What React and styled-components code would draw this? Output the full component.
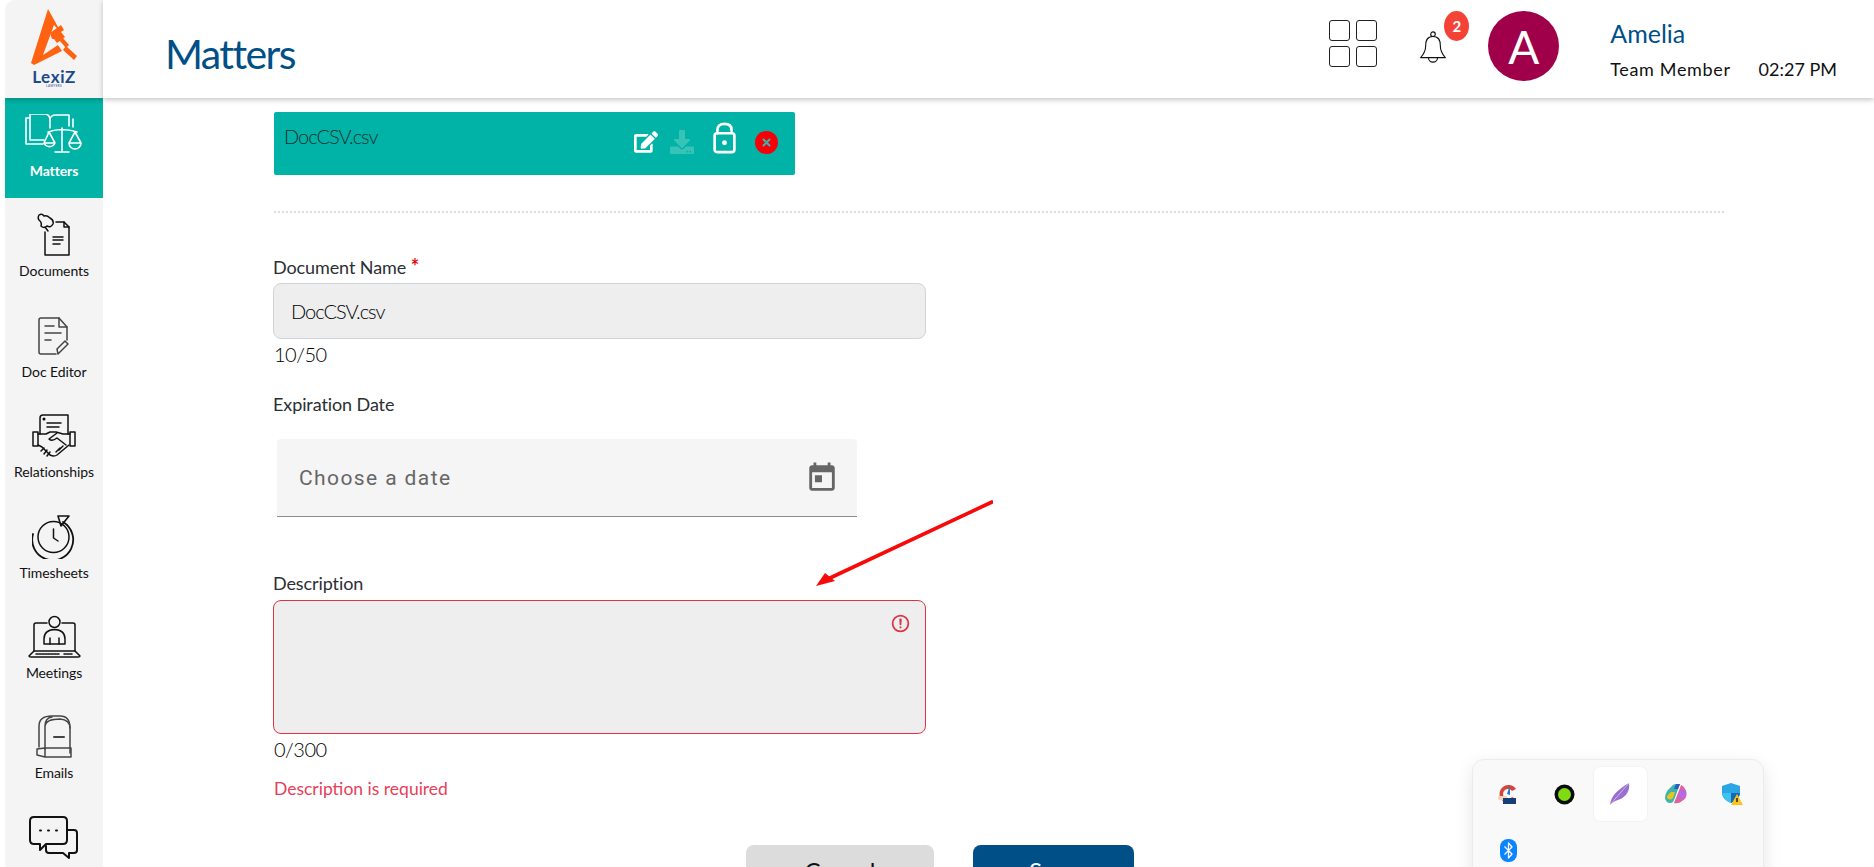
import React from 'react';
import styled, { createGlobalStyle } from 'styled-components';
import { FaEdit, FaDownload } from 'react-icons/fa';

const GlobalStyle = createGlobalStyle`
  html, body {
    margin: 0;
    padding: 0;
    height: 867px;
    overflow: hidden;
    background: #fff;
    font-family: 'Lato', 'Open Sans', sans-serif;
    color: #212529;
  }
`;

const Page = styled.div`
  display: flex;
  width: 1874px;
  height: 867px;
  overflow: hidden;
  position: relative;
`;

const Sidebar = styled.nav`
  width: 98px;
  margin-left: 5px;
  flex-shrink: 0;
  background: #f4f4f4;
  border-top-left-radius: 10px;
  display: flex;
  flex-direction: column;
  overflow: hidden;
`;

const LogoCell = styled.div`
  height: 98px;
  flex-shrink: 0;
  display: flex;
  flex-direction: column;
  align-items: center;
  padding-top: 9px;
  box-sizing: border-box;
  position: relative;
  z-index: 2;
  box-shadow: 0 2px 5px rgba(0, 0, 0, 0.22);
`;

const LogoName = styled.span`
  font-size: 17px;
  line-height: 15px;
  font-weight: 700;
  color: #1d4a8c;
  letter-spacing: 0.6px;
  margin-top: 4px;
`;

const LogoTag = styled.span`
  font-size: 3px;
  line-height: 5px;
  color: #1d4a8c;
  letter-spacing: 0.3px;
`;

const NavItem = styled.a`
  height: 100.4px;
  flex-shrink: 0;
  display: flex;
  flex-direction: column;
  align-items: center;
  justify-content: flex-start;
  padding-top: 15px;
  box-sizing: border-box;
  background: ${({ $active }) => ($active ? '#00b3a6' : 'transparent')};
  color: ${({ $active }) => ($active ? '#fff' : '#111')};
  font-size: 14px;
  letter-spacing: -0.1px;
  font-weight: ${({ $active }) => ($active ? 700 : 400)};
  svg {
    display: block;
  }
`;

const NavIconBox = styled.div`
  height: 44px;
  display: flex;
  align-items: center;
  justify-content: center;
  margin-bottom: 5px;
`;

const Main = styled.div`
  flex: 1;
  min-width: 0;
  display: flex;
  flex-direction: column;
`;

const Header = styled.header`
  height: 98px;
  flex-shrink: 0;
  display: flex;
  align-items: center;
  background: #fff;
  box-shadow: 0 2px 5px rgba(0, 0, 0, 0.22);
  padding: 0 37px 0 63px;
  position: relative;
  z-index: 1;
`;

const Title = styled.h1`
  margin: 0 auto 0 -1px;
  font-size: 41px;
  font-weight: 400;
  color: #004f86;
  letter-spacing: -1.6px;
  position: relative;
  top: 4px;
`;

const GridIcon = styled.div`
  display: grid;
  grid-template-columns: 21px 21px;
  grid-template-rows: 21px 21px;
  gap: 5px 6px;
  margin: 0 42px 11px 0;
`;

const GridCell = styled.span`
  border: 1.5px solid #222;
  border-radius: 3px;
`;

const BellWrap = styled.div`
  position: relative;
  width: 28px;
  height: 33px;
  margin: 0 41px 3px 0;
`;

const Badge = styled.span`
  position: absolute;
  left: 25px;
  top: -20px;
  width: 25px;
  height: 30px;
  border-radius: 50%;
  background: #f44336;
  color: #fff;
  font-size: 15px;
  font-weight: 700;
  display: flex;
  align-items: center;
  justify-content: center;
`;

const Avatar = styled.div`
  width: 71px;
  height: 70px;
  border-radius: 50%;
  background: #a0004a;
  color: #fff;
  font-size: 46px;
  display: flex;
  align-items: center;
  justify-content: center;
  margin: 0 51px 6px 0;
`;

const UserBlock = styled.div`
  display: flex;
  flex-direction: column;
  gap: 10px;
`;

const UserName = styled.span`
  font-size: 25px;
  line-height: 30px;
  color: #004f86;
`;

const UserMeta = styled.div`
  display: flex;
  gap: 28px;
  font-size: 18px;
  line-height: 22px;
  color: #111;
`;

const RoleText = styled.span`
  letter-spacing: 0.65px;
`;

const Content = styled.main`
  padding: 14px 150px 0 171px;
  position: relative;
`;

const FileBar = styled.div`
  width: 521px;
  height: 63px;
  background: #00b3a6;
  border-radius: 2px;
  display: flex;
  justify-content: space-between;
  padding: 12px 17px 0 10px;
  box-sizing: border-box;
`;

const FileName = styled.span`
  font-size: 20px;
  font-weight: 300;
  line-height: 24px;
  letter-spacing: -1px;
  color: #17312f;
`;

const FileActions = styled.div`
  display: flex;
  align-items: flex-end;
  gap: 19px;
  height: 30px;
`;

const EditGroup = styled.div`
  display: flex;
  align-items: flex-end;
  gap: 12px;
`;

const ActionIcon = styled.span`
  display: flex;
  opacity: ${({ $dim }) => ($dim ? 0.22 : 1)};
  color: #fff;
`;

const Divider = styled.hr`
  margin: 36px 0 0;
  border: 0;
  border-top: 2px dotted #dcdcdc;
`;

const FieldLabel = styled.label`
  display: block;
  font-size: 18px;
  line-height: 22px;
  color: #2b2f33;
  letter-spacing: -0.1px;
  margin-left: -1px;
  margin-top: ${({ $top }) => $top}px;
`;

const Required = styled.span`
  color: #e01010;
  font-weight: 700;
  font-size: 20px;
  line-height: 18px;
`;

const TextBox = styled.div`
  width: 653px;
  height: 56px;
  margin-top: 5px;
  margin-left: -1px;
  box-sizing: border-box;
  background: #eee;
  border: 1px solid #ced4da;
  border-radius: 8px;
  padding: 0 17px;
  display: flex;
  align-items: center;
  font-size: 20px;
  font-weight: 300;
  letter-spacing: -1px;
  color: #000;
`;

const Counter = styled.div`
  font-size: 20px;
  font-weight: 300;
  line-height: 24px;
  letter-spacing: -0.5px;
  margin-top: 3px;
  color: #000;
`;

const DateBox = styled.div`
  width: 580px;
  height: 78px;
  margin: 24px 0 0 3px;
  box-sizing: border-box;
  background: #f5f5f5;
  border-bottom: 1px solid #8b8b8b;
  border-radius: 4px 4px 0 0;
  padding: 0 18px 0 22px;
  display: flex;
  align-items: center;
  justify-content: space-between;
  font-family: 'Roboto', sans-serif;
  font-size: 21px;
  letter-spacing: 1.4px;
  color: #666;
`;

const TextArea = styled.div`
  width: 653px;
  height: 134px;
  margin: 6px 0 0 -1px;
  box-sizing: border-box;
  background: #eee;
  border: 1px solid #dc3545;
  border-radius: 8px;
  display: flex;
  justify-content: flex-end;
  padding: 12px 14px;
`;

const ErrorText = styled.div`
  font-size: 17.5px;
  line-height: 22px;
  color: #e6405a;
  margin-top: 17px;
`;

const ButtonRow = styled.div`
  display: flex;
  gap: 39px;
  margin: 45px 0 0 472px;
`;

const ActionButton = styled.button`
  width: ${({ $primary }) => ($primary ? 161 : 188)}px;
  height: 50px;
  border: 0;
  border-radius: 8px;
  font-family: inherit;
  font-size: 24px;
  background: ${({ $primary }) => ($primary ? '#004f86' : '#dcdcdc')};
  color: ${({ $primary }) => ($primary ? '#fff' : '#111')};
`;

const Arrow = styled.svg`
  position: absolute;
  left: 700px;
  top: 395px;
`;

const TrayPanel = styled.div`
  position: absolute;
  left: 1472px;
  top: 759px;
  width: 292px;
  height: 130px;
  box-sizing: border-box;
  background: #f9f9f9;
  border: 1px solid #ececec;
  border-radius: 12px;
  box-shadow: 0 6px 18px rgba(0, 0, 0, 0.1);
  padding: 6px 7px;
  display: grid;
  grid-template-columns: repeat(5, 56px);
  grid-auto-rows: 56px;
  justify-items: center;
  align-items: center;
`;

const TrayTile = styled.div`
  width: 53px;
  height: 54px;
  display: flex;
  align-items: center;
  justify-content: center;
  border-radius: 6px;
  background: ${({ $hover }) => ($hover ? '#fff' : 'transparent')};
  box-shadow: ${({ $hover }) => ($hover ? '0 0 2px rgba(0,0,0,0.08)' : 'none')};
`;

const stroke = { fill: 'none', stroke: '#111', strokeWidth: 1.5, strokeLinecap: 'round', strokeLinejoin: 'round' };

const LogoMark = () => (
  <svg width="46" height="56" viewBox="0 0 46 56" fill="#ff6311">
    <path d="M17 0 L31 25 L23 16 L12 46 L27 36 L31 42 L3 56 L0 54 Z" />
    <path d="M19 24 L30 16 L33 21 L30 23 L34 28 L26 34 L23 30 L21 30 Z" />
    <path d="M28 31 L31 28 L38 36 L35 39 Z" />
    <path d="M32 41 L35 37 L46 47 L43 51 Z" />
  </svg>
);

const MattersIcon = () => (
  <svg width="58" height="42" viewBox="0 0 58 42" fill="none" stroke="#fff" strokeWidth="1.6" strokeLinecap="round" strokeLinejoin="round">
    <path d="M5 4 H1 V30 H18" />
    <path d="M5 0 H19 Q25 0 25 6 V14" />
    <path d="M25 6 Q25 1 31 1 H44 V12" />
    <path d="M5 0 V26 H19" />
    <path d="M48 5 V13" />
    <path d="M37 14 V38 M30 38 H44 M23 18 Q37 13 52 18" />
    <path d="M24 18 L19 29 H30 Z M19 29 A6 6 0 0 0 30 29" />
    <path d="M50 18 L44 29 H56 Z M44 29 A6 6 0 0 0 56 29" />
  </svg>
);

const DocumentsIcon = () => (
  <svg width="36" height="44" viewBox="0 0 36 44" {...stroke}>
    <path d="M3 2 Q6 0 8 3 Q11 2 14 5 Q18 7 17 11 Q15 15 11 13 Q8 16 5 13 Q6 10 4 8 Q1 6 3 2 Z" />
    <path d="M9 14 L12 18" />
    <path d="M20 9 H28 L33 14 V42 H9 V19" />
    <path d="M28 9 V14 H33" />
    <path d="M17 24 H27 M17 27 H27 M17 31 H24" />
  </svg>
);

const DocEditorIcon = () => (
  <svg width="32" height="38" viewBox="0 0 32 38" fill="none" stroke="#444" strokeWidth="1.5" strokeLinecap="round" strokeLinejoin="round">
    <path d="M18 37 H3 Q1 37 1 35 V3 Q1 1 3 1 H21 L29 10 V23" />
    <path d="M21 1 V10 H29" />
    <path d="M7 9 H16 M7 16 H23 M7 23 H13" />
    <path d="M20 37 L19 32 L27 24 L30 27 L22 35 Z" />
  </svg>
);

const RelationshipsIcon = () => (
  <svg width="44" height="44" viewBox="0 0 44 44" {...stroke}>
    <path d="M8 20 V4 Q8 1 11 1 H36 V20" />
    <path d="M15 9 H29 M15 13 H27" />
    <circle cx="12" cy="5" r="0.8" />
    <path d="M1 18 H6 V32 H1 Z M38 18 H43 V32 H38 Z" />
    <path d="M6 20 H14 L18 18 H24 L31 20 H38" />
    <path d="M6 31 L10 33 L18 41 Q22 43 25 41 L37 31" />
    <path d="M25 19 L17 25 Q20 28 25 24 L34 31" />
    <path d="M12 34 L9 37 M15 36 L12 40 M18 38 L15 42 M28 34 L24 38 M31 32 L27 36" />
  </svg>
);

const TimesheetsIcon = () => (
  <svg width="44" height="44" viewBox="0 0 44 44" {...stroke}>
    <circle cx="21.5" cy="22" r="15.5" />
    <path d="M21.5 14 V23 L26 26" />
    <path d="M31 7 A20.5 20.5 0 1 1 1 19" strokeWidth="1.8" />
    <path d="M26 1 L37 1 L29 11 Z" strokeWidth="1.6" />
  </svg>
);

const MeetingsIcon = () => (
  <svg width="53" height="43" viewBox="0 0 53 43" {...stroke}>
    <circle cx="26.5" cy="7" r="5.5" />
    <path d="M16 29 V24 Q16 15 26.5 14.5 Q37 15 37 24 V29 Z" />
    <path d="M22 29 V23 M31 29 V23" />
    <path d="M19 8 H8 Q6 8 6 10 V36 M34 8 H45 Q47 8 47 10 V36" />
    <path d="M1 41 L6 36 H47 L52 41 Q52 42 50 42 H3 Q1 42 1 41 Z" />
    <path d="M8 39 H32 M36 39 H45" strokeDasharray="2 1" />
  </svg>
);

const EmailsIcon = () => (
  <svg width="37" height="44" viewBox="0 0 37 44" fill="none" stroke="#444" strokeWidth="1.5" strokeLinecap="round" strokeLinejoin="round">
    <path d="M3 32 V11 Q3 1 16 1 H24 Q34 1 34 13 V38" />
    <path d="M9 34 V11 Q9 3 16 2 M9 11 Q10 4 24 4 Q34 5 34 13" />
    <path d="M18 22 H28" strokeWidth="2" />
    <path d="M1 34 L9 33 H35 V42 H9 L1 40 Z M9 33 V42" />
  </svg>
);

const ChatIcon = () => (
  <svg width="50" height="44" viewBox="0 0 50 44" fill="none" stroke="#111" strokeWidth="2" strokeLinecap="round" strokeLinejoin="round">
    <path d="M5 1 H34 Q38 1 38 5 V24 Q38 28 34 28 H17 L11 34 V28 H5 Q1 28 1 24 V5 Q1 1 5 1 Z" />
    <path d="M38 14 H45 Q48 14 48 17 V34 Q48 37 45 37 H40 V42 L34 37 H20 Q17 37 17 34 V30" />
    <path d="M11 14.5 H12 M19 14.5 H20 M27 14.5 H28" />
  </svg>
);

const BellIcon = () => (
  <svg width="28" height="33" viewBox="0 0 30 36" fill="none" stroke="#111" strokeWidth="1.2" strokeLinejoin="round">
    <circle cx="15" cy="3.5" r="2.5" />
    <path d="M15 6 C8 6 7 11 7 16 C7 23 4 26 1.5 29 H28.5 C26 26 23 23 23 16 C23 11 22 6 15 6 Z" />
    <path d="M10 29 A5 5 0 0 0 20 29" />
  </svg>
);

const UnlockIcon = () => (
  <svg width="23" height="32" viewBox="0 0 24 34" fill="none" stroke="#fff" strokeWidth="2.8" strokeLinecap="round">
    <path d="M4.5 12 V8.5 Q4.5 2 12 2 Q19.5 2 19.5 8.5 V9.5" />
    <rect x="1.5" y="12" width="21" height="20" rx="2.5" />
    <circle cx="12" cy="22" r="2.6" fill="#fff" stroke="none" />
  </svg>
);

const RemoveIcon = () => (
  <svg width="23" height="23" viewBox="0 0 23 23">
    <circle cx="11.5" cy="11.5" r="11.5" fill="#f60007" />
    <path d="M8.5 8.5 L14.5 14.5 M14.5 8.5 L8.5 14.5" stroke="#35b8ac" strokeWidth="2" strokeLinecap="round" />
  </svg>
);

const CalendarIcon = () => (
  <svg width="34" height="34" viewBox="0 0 24 24" fill="#666">
    <path d="M19 3h-1V1h-2v2H8V1H6v2H5c-1.11 0-1.99.9-1.99 2L3 19c0 1.1.89 2 2 2h14c1.1 0 2-.9 2-2V5c0-1.1-.9-2-2-2zm0 16H5V8h14v11zM7 10h5v5H7z" />
  </svg>
);

const InvalidIcon = () => (
  <svg width="21" height="21" viewBox="0 0 12 12" fill="none" stroke="#dc3545">
    <circle cx="6" cy="6" r="4.5" />
    <path strokeLinejoin="round" d="M5.8 3.6h.4L6 6.5z" />
    <circle cx="6" cy="8.2" r=".6" fill="#dc3545" stroke="none" />
  </svg>
);

const CleanerIcon = () => (
  <svg width="22" height="22" viewBox="0 0 22 22">
    <path d="M19 6 A9 9 0 1 0 19 16 L15 14 A5 5 0 1 1 15 8 Z" fill="#d8443a" />
    <path d="M13 2 L10 11 L13 12 Z" fill="#1d7bd0" />
    <rect x="1" y="13" width="9" height="4" rx="1" fill="#f2d5b8" />
    <rect x="6" y="15" width="13" height="6" fill="#173d7a" />
  </svg>
);

const GreenDotIcon = () => (
  <svg width="21" height="21" viewBox="0 0 21 21">
    <circle cx="10.5" cy="10.5" r="10" fill="#0b0b0b" />
    <circle cx="10.5" cy="10.5" r="6.5" fill="#7fdc12" />
  </svg>
);

const FeatherIcon = () => (
  <svg width="22" height="24" viewBox="0 0 22 24">
    <path d="M1 23 C2 14 8 8 20 1 C21 8 18 15 9 18 C6 19 4 20 1 23 Z" fill="#9a6fd0" />
    <path d="M1 23 C6 17 12 10 20 1" stroke="#d9c8ef" strokeWidth="0.8" fill="none" />
  </svg>
);

const CopilotIcon = () => (
  <svg width="22" height="20" viewBox="0 0 22 20">
    <path d="M6 3 Q8 0 11 0 H15 L9 16 Q8 19 5 19 Q1 19 0 14 Q0 8 6 3 Z" fill="#3bb5a8" />
    <path d="M2 12 L6 8 H10 L8 14 Q5 17 2 14 Z" fill="#e7c325" />
    <path d="M16 1 Q19 2 21 7 Q23 14 17 17 Q14 20 9 19 L15 4 Z" fill="#e55f9d" />
    <path d="M15 6 H21 Q22 12 18 15 H13 Z" fill="#b46be0" />
    <path d="M11 0 H15 L13 5 H9 Z" fill="#2c58c9" />
  </svg>
);

const DefenderIcon = () => (
  <svg width="22" height="22" viewBox="0 0 22 22">
    <path d="M10 0 L19 3 V11 Q18 17 10 20 Q2 17 1 11 V3 Z" fill="#2aa5e6" />
    <path d="M10 10 H19 Q18 17 10 20 Z" fill="#1668b8" />
    <path d="M1 10 H10 V20 Q2 17 1 10 Z" fill="#3fc2ee" />
    <path d="M16 11 L22 22 H10 Z" fill="#fcc419" />
    <path d="M16 15 V19" stroke="#222" strokeWidth="1.5" />
  </svg>
);

const BluetoothIcon = () => (
  <svg width="17" height="23" viewBox="0 0 17 23">
    <rect width="17" height="23" rx="8" fill="#0a84ff" />
    <path d="M4.5 7.5 L12 15 L8.5 19 V4 L12 8 L4.5 15.5" fill="none" stroke="#fff" strokeWidth="1.3" strokeLinejoin="round" />
  </svg>
);

const navItems = [
  { label: 'Documents', icon: <DocumentsIcon /> },
  { label: 'Doc Editor', icon: <DocEditorIcon /> },
  { label: 'Relationships', icon: <RelationshipsIcon /> },
  { label: 'Timesheets', icon: <TimesheetsIcon /> },
  { label: 'Meetings', icon: <MeetingsIcon /> },
  { label: 'Emails', icon: <EmailsIcon /> },
  { label: '', icon: <ChatIcon /> },
];

const App = () => (
  <>
    <GlobalStyle />
    <Page>
      <Sidebar>
        <LogoCell>
          <LogoMark />
          <LogoName>LexiZ</LogoName>
          <LogoTag>LAWYERS</LogoTag>
        </LogoCell>
        <NavItem $active>
          <NavIconBox>
            <MattersIcon />
          </NavIconBox>
          Matters
        </NavItem>
        {navItems.map(({ label, icon }) => (
          <NavItem key={label || 'chat'}>
            <NavIconBox>{icon}</NavIconBox>
            {label}
          </NavItem>
        ))}
      </Sidebar>
      <Main>
        <Header>
          <Title>Matters</Title>
          <GridIcon>
            <GridCell />
            <GridCell />
            <GridCell />
            <GridCell />
          </GridIcon>
          <BellWrap>
            <BellIcon />
            <Badge>2</Badge>
          </BellWrap>
          <Avatar>A</Avatar>
          <UserBlock>
            <UserName>Amelia</UserName>
            <UserMeta>
              <RoleText>Team Member</RoleText>
              <span>02:27 PM</span>
            </UserMeta>
          </UserBlock>
        </Header>
        <Content>
          <FileBar>
            <FileName>DocCSV.csv</FileName>
            <FileActions>
              <EditGroup>
                <ActionIcon>
                  <FaEdit size={24} />
                </ActionIcon>
                <ActionIcon $dim>
                  <FaDownload size={24} />
                </ActionIcon>
              </EditGroup>
              <ActionIcon>
                <UnlockIcon />
              </ActionIcon>
              <ActionIcon>
                <RemoveIcon />
              </ActionIcon>
            </FileActions>
          </FileBar>
          <Divider />
          <FieldLabel $top={43}>
            Document Name <Required>*</Required>
          </FieldLabel>
          <TextBox>DocCSV.csv</TextBox>
          <Counter>10/50</Counter>
          <FieldLabel $top={27}>Expiration Date</FieldLabel>
          <DateBox>
            Choose a date
            <CalendarIcon />
          </DateBox>
          <FieldLabel $top={55}>Description</FieldLabel>
          <TextArea>
            <InvalidIcon />
          </TextArea>
          <Counter>0/300</Counter>
          <ErrorText>Description is required</ErrorText>
          <ButtonRow>
            <ActionButton>Cancel</ActionButton>
            <ActionButton $primary>Save</ActionButton>
          </ButtonRow>
          <Arrow width="190" height="100" viewBox="0 0 190 100">
            <path d="M189 9 L27 85" stroke="#f60a0a" strokeWidth="3.6" strokeLinecap="round" />
            <path d="M13 93 L22 80 L32 88 Z" fill="#f60a0a" />
          </Arrow>
        </Content>
      </Main>
      <TrayPanel>
        <TrayTile>
          <CleanerIcon />
        </TrayTile>
        <TrayTile>
          <GreenDotIcon />
        </TrayTile>
        <TrayTile $hover>
          <FeatherIcon />
        </TrayTile>
        <TrayTile>
          <CopilotIcon />
        </TrayTile>
        <TrayTile>
          <DefenderIcon />
        </TrayTile>
        <TrayTile>
          <BluetoothIcon />
        </TrayTile>
      </TrayPanel>
    </Page>
  </>
);

export default App;
